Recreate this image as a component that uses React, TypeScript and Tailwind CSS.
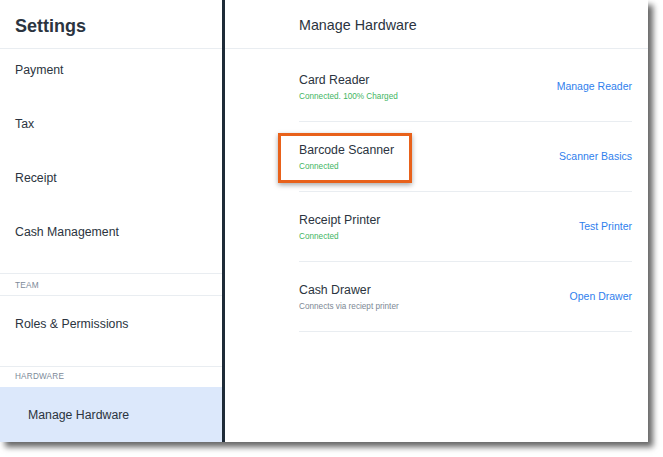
const font = { fontFamily: '"Liberation Sans", Arial, sans-serif' };

const navTop = ["Payment", "Tax", "Receipt", "Cash Management"];

const devices = [
  { name: "Card Reader", status: "Connected. 100% Charged", ok: true, action: "Manage Reader" },
  { name: "Barcode Scanner", status: "Connected", ok: true, action: "Scanner Basics" },
  { name: "Receipt Printer", status: "Connected", ok: true, action: "Test Printer" },
  { name: "Cash Drawer", status: "Connects via reciept printer", ok: false, action: "Open Drawer" },
];

function Sidebar() {
  return (
    <div className="w-[225px] h-full flex flex-col border-r-[3px] border-[#1e2b38] text-[#2b3440]">
      <div className="h-[49px] shrink-0 flex items-center pl-[15px] pt-[3px] border-b border-[#e9edf1]">
        <span className="text-[18px] font-bold leading-none">Settings</span>
      </div>
      <div className="pb-[8px] border-b border-[#e9edf1]">
        {navTop.map((n) => (
          <div key={n} className="h-[54px] pt-[12px] pl-[15px] text-[12.3px] leading-[18px]">
            {n}
          </div>
        ))}
      </div>
      <div className="h-[22px] shrink-0 flex items-center pl-[15px] pt-[1px] border-b border-[#e9edf1] text-[8.3px] text-[#7d8a99] tracking-[0.2px]">
        TEAM
      </div>
      <div className="h-[71px] shrink-0 pt-[19px] pl-[15px] border-b border-[#e9edf1] text-[12.3px] leading-[18px]">
        Roles &amp; Permissions
      </div>
      <div className="h-[20px] shrink-0 flex items-center pl-[15px] pt-[1px] text-[8.2px] text-[#7d8a99] tracking-[0.2px]">
        HARDWARE
      </div>
      <div className="flex-1 flex items-center pl-[28px] pt-[1px] bg-[#dce8fb] text-[12.3px]">
        Manage Hardware
      </div>
    </div>
  );
}

function Main() {
  return (
    <div className="relative flex-1 h-full flex flex-col text-[#2b3440]">
      <div className="h-[49px] shrink-0 flex items-center pl-[74px] pt-[2px] border-b border-[#e9edf1]">
        <span className="text-[14.3px] leading-none">Manage Hardware</span>
      </div>
      <div className="pt-[3px] pl-[74px] pr-[16px]">
        {devices.map((d) => (
          <div key={d.name} className="h-[70px] flex items-center justify-between border-b border-[#e9edf1]">
            <div className="flex flex-col pt-[1px]">
              <span className="text-[12.3px] leading-[15px]">{d.name}</span>
              <span
                className={
                  "mt-[4px] text-[8.2px] leading-[10px] " + (d.ok ? "text-[#3fb562]" : "text-[#7d8894]")
                }
              >
                {d.status}
              </span>
            </div>
            <span className="text-[10.5px] text-[#2f80ed]">{d.action}</span>
          </div>
        ))}
      </div>
      <div className="absolute left-[53px] top-[133px] w-[134px] h-[50px] border-[3px] border-[#e8611a] shadow-[0_2px_5px_rgba(0,0,0,0.35)]" />
    </div>
  );
}

export default function App() {
  return (
    <div className="w-[663px] h-[457px] bg-white" style={font}>
      <div className="w-[648px] h-[442px] flex bg-white shadow-[5px_5px_6px_rgba(0,0,0,0.6)]">
        <Sidebar />
        <Main />
      </div>
    </div>
  );
}
